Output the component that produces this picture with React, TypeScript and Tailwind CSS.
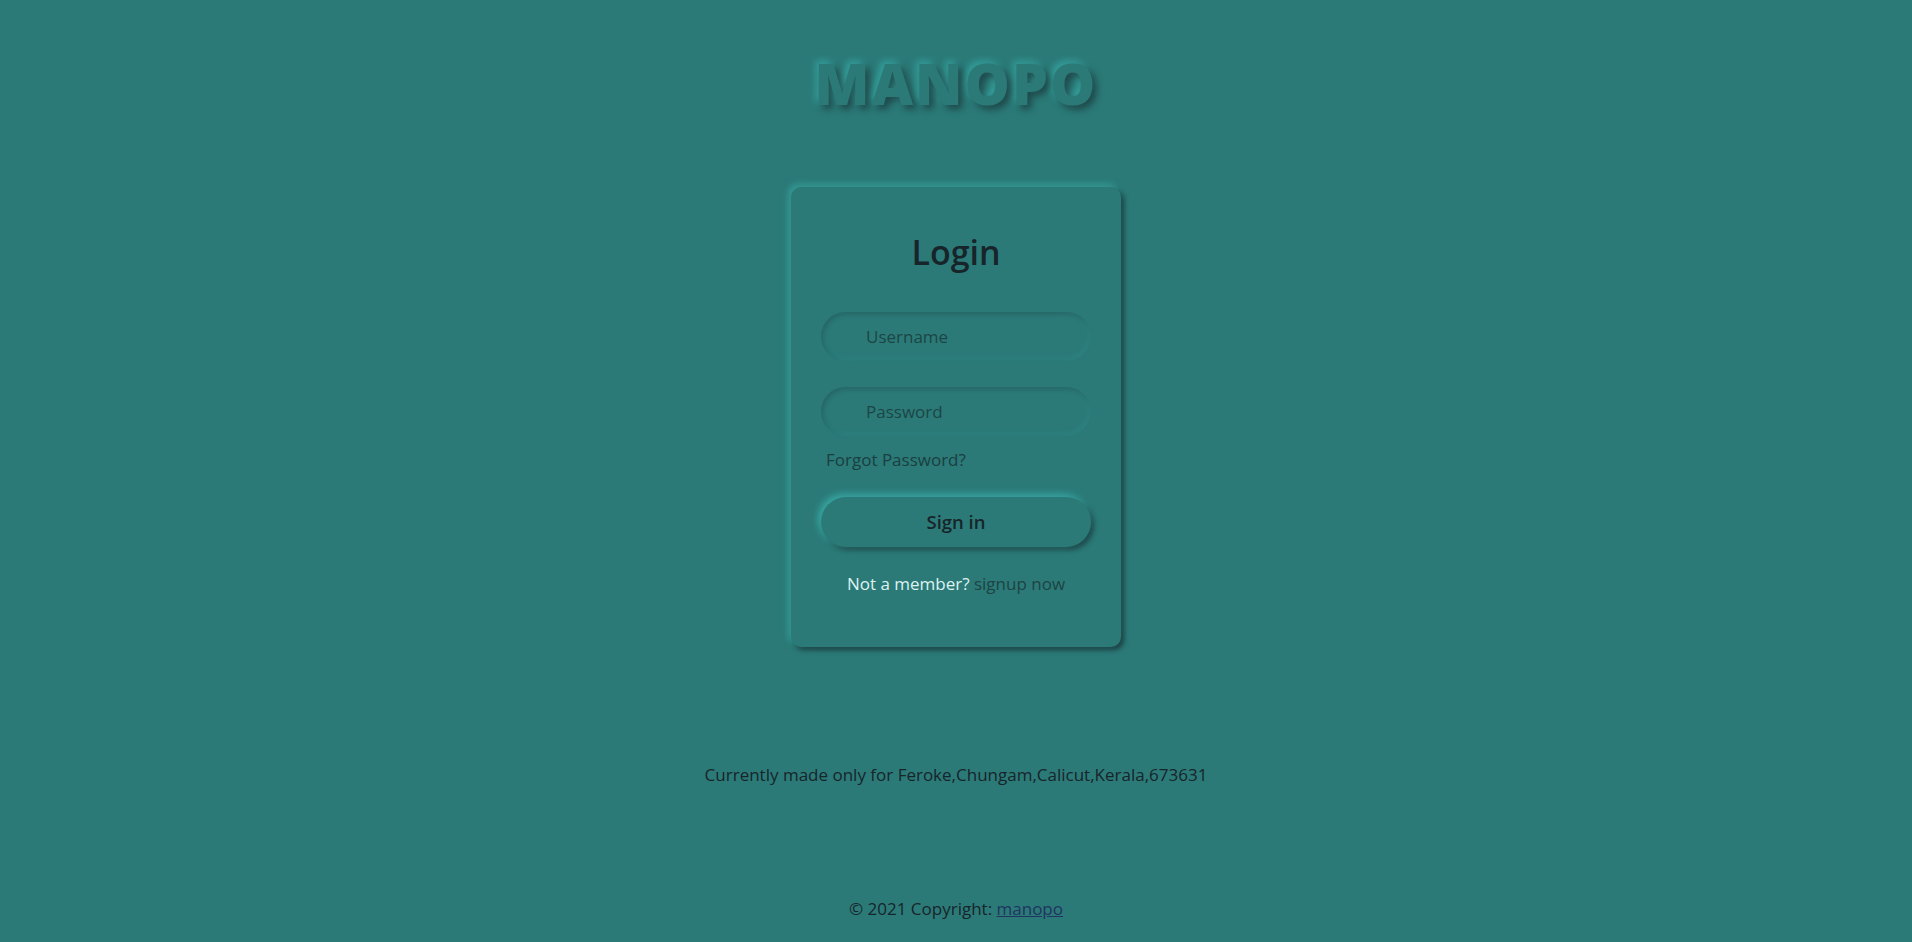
import React from "react";

export default function App() {
  return (
    <div className="min-h-[942px] w-full bg-[#2b7a78] flex flex-col items-center font-['Open_Sans',sans-serif]">
      <div className="pt-[43px] h-[123px] flex items-start">
        <h1 className="h-[80px] leading-[80px] text-[57px] font-extrabold tracking-[2px] text-[#2b7a78] [text-shadow:4px_4px_7px_rgba(23,37,42,0.6),-3px_-3px_7px_rgba(58,175,169,0.75)]">
          MANOPO
        </h1>
      </div>

      <div className="mt-[64px] w-[330px] h-[460px] rounded-[10px] bg-[#2b7a78] shadow-[-3px_-3px_6px_rgba(58,175,169,0.6),3px_3px_5px_rgba(23,37,42,0.7)] flex flex-col items-center pt-[45px]">
        <h2 className="h-[40px] leading-[40px] text-[34px] font-semibold text-[#17252a]">Login</h2>

        <div className="mt-[40px] w-[270px] h-[49px] rounded-full shadow-[inset_2px_2px_5px_rgba(23,37,42,0.25),inset_-2px_-2px_5px_rgba(58,175,169,0.2)] flex items-center pl-[45px]">
          <span className="text-[17px] text-[#1b4646]">Username</span>
        </div>

        <div className="mt-[26px] w-[270px] h-[49px] rounded-full shadow-[inset_2px_2px_5px_rgba(23,37,42,0.25),inset_-2px_-2px_5px_rgba(58,175,169,0.2)] flex items-center pl-[45px]">
          <span className="text-[17px] text-[#1b4646]">Password</span>
        </div>

        <div className="mt-[12px] w-[270px] h-[24px] leading-[24px] pl-[5px] text-[17px] text-[#1a3f40]">
          Forgot Password?
        </div>

        <button className="mt-[25px] w-[270px] h-[50px] rounded-full bg-[#2b7a78] shadow-[-3px_-3px_7px_rgba(58,175,169,0.85),3px_3px_5px_rgba(23,37,42,0.6)] text-[18.5px] font-semibold text-[#17252a]">
          Sign in
        </button>

        <div className="mt-[25px] h-[24px] leading-[24px] text-[17px]">
          <span className="font-medium text-[#def2f1]">Not a member?</span>{" "}
          <span className="text-[#1d4344]">signup now</span>
        </div>
      </div>

      <div className="mt-[116px] h-[24px] leading-[24px] text-[17px] text-[#17252a]">
        Currently made only for Feroke,Chungam,Calicut,Kerala,673631
      </div>

      <div className="mt-[110px] h-[24px] leading-[24px] text-[17px] text-[#17252a]">
        © 2021 Copyright: <a className="underline text-[#1f3560]">manopo</a>
      </div>
    </div>
  );
}
